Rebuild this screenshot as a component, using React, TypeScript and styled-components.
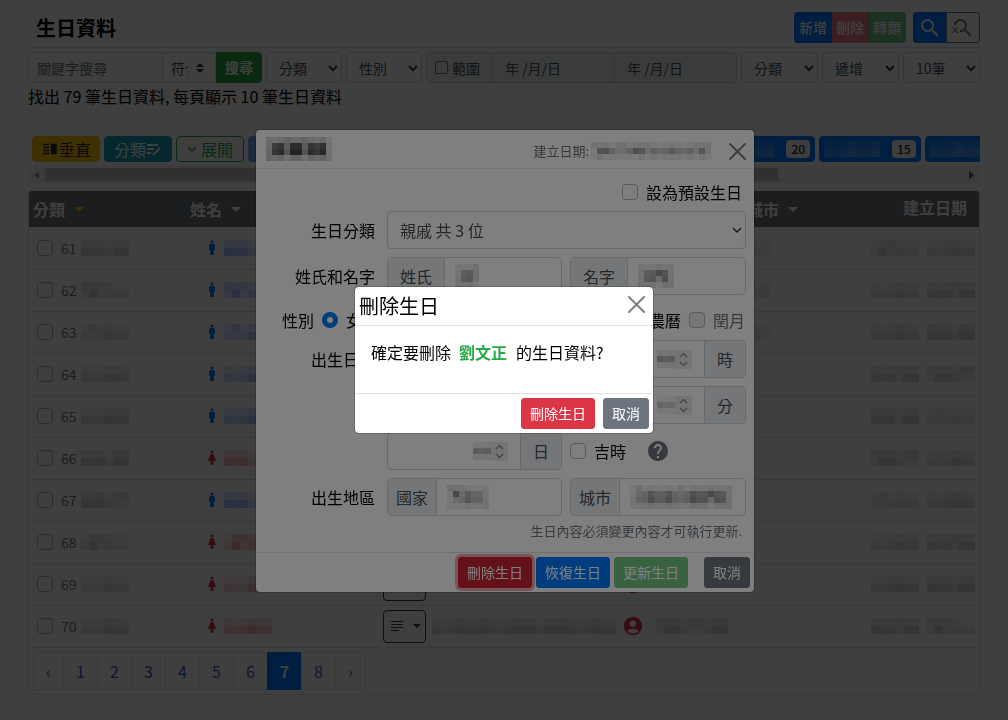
import React from "react";
import styled, { createGlobalStyle, css } from "styled-components";
import {
  MdAccountCircle,
  MdHelp,
  MdSearch,
  MdSearchOff,
  MdVerticalSplit,
} from "react-icons/md";

const BLUE = "#007bff";
const GREEN = "#28a745";
const RED = "#dc3545";
const GREY = "#6c757d";
const LINE = "#dee2e6";
const INPUT_LINE = "#ced4da";

const GlobalStyle = createGlobalStyle`
  *, *::before, *::after { box-sizing: border-box; }
  body {
    margin: 0;
    background: #fff;
    color: #000;
    font-family: "Noto Sans CJK TC", "Noto Sans", sans-serif;
    font-size: 16px;
    line-height: 24px;
  }
  button, input, select { font-family: inherit; margin: 0; }
`;

/* ---------- shared parts ---------- */

type MosaicProps = {
  cols: number;
  rows: number;
  cell?: number;
  color?: string;
  seed?: number;
  strength?: number;
};

const MosaicSvg = styled.svg`
  display: block;
  flex: none;
`;

/* Pixelated cover over private values; tall covers fade towards their edges. */
function Mosaic({ cols, rows, cell = 8, color = "#343a40", seed = 1, strength = 0.25 }: MosaicProps) {
  const cells: React.ReactNode[] = [];
  for (let r = 0; r < rows; r++) {
    for (let c = 0; c < cols; c++) {
      const noise = ((c * 37 + r * 53 + seed * 71 + c * c * 11) % 17) / 17;
      const edgeRow = rows > 2 && (r === 0 || r === rows - 1);
      const edgeCol = rows > 2 && cols > 3 && (c === 0 || c === cols - 1);
      const fade = edgeRow || edgeCol ? 0.3 : rows === 2 && r === 0 ? 0.6 : 1;
      cells.push(
        <rect
          key={`${r}-${c}`}
          x={c * cell}
          y={r * cell}
          width={cell}
          height={cell}
          fill={color}
          opacity={strength * fade * (0.35 + noise * 0.65)}
        />
      );
    }
  }
  return (
    <MosaicSvg width={cols * cell} height={rows * cell} shapeRendering="crispEdges" aria-hidden="true">
      {cells}
    </MosaicSvg>
  );
}

const Check = styled.input`
  appearance: none;
  flex: none;
  width: 16px;
  height: 16px;
  border: 1px solid #adb5bd;
  border-radius: 4px;
  background: #fff;
  &:disabled { background: #e9ecef; }
`;

const Radio = styled.input`
  appearance: none;
  flex: none;
  width: 16px;
  height: 16px;
  border: 1px solid #adb5bd;
  border-radius: 50%;
  &:checked { border: 5px solid ${BLUE}; }
`;

const Button = styled.button<{ $bg: string; $faded?: boolean; $focus?: boolean }>`
  height: 31px;
  padding: 0 8px;
  border: 1px solid ${(p) => p.$bg};
  border-radius: 3px;
  background: ${(p) => p.$bg};
  color: #fff;
  font-size: 14px;
  line-height: 21px;
  white-space: nowrap;
  opacity: ${(p) => (p.$faded ? 0.65 : 1)};
  ${(p) => p.$focus && css`box-shadow: 0 0 0 3px rgba(225, 83, 97, 0.5);`}
`;

const SelectBox = styled.div<{ $width?: number }>`
  display: grid;
  align-items: center;
  ${(p) => (p.$width ? `flex: 0 0 ${p.$width}px;` : "")}
  > * { grid-area: 1 / 1; }
  > svg { justify-self: end; margin-right: 4px; pointer-events: none; }
`;

const Select = styled.select<{ $large?: boolean }>`
  appearance: none;
  width: 100%;
  height: ${(p) => (p.$large ? 38 : 31)}px;
  padding: 0 12px;
  border: 1px solid ${INPUT_LINE};
  border-radius: 4px;
  background: #fff;
  color: #495057;
  font-size: ${(p) => (p.$large ? 16 : 14)}px;
`;

function Chevron({ size = 10, width = 2, color = "#343a40" }) {
  return (
    <svg width={size} height={size} viewBox="0 0 10 10" fill="none" stroke={color} strokeWidth={width}>
      <path d="M1 3l4 4 4-4" />
    </svg>
  );
}

function Dropdown({ label, text, width }: { label: string; text: string; width: number }) {
  return (
    <SelectBox $width={width}>
      <Select aria-label={label}>
        <option>{text}</option>
      </Select>
      <Chevron />
    </SelectBox>
  );
}

/* ---------- page ---------- */

const Page = styled.main`
  padding: 12px 28px 0;
`;

const TitleBar = styled.header`
  display: flex;
  align-items: center;
  height: 36px;
  padding: 0 0 4px 8px;
  border-bottom: 1px solid ${LINE};
`;

const Title = styled.h1`
  flex: 1;
  margin: 0;
  font-size: 20px;
  line-height: 30px;
  font-weight: 700;
`;

const ButtonGroup = styled.div`
  display: flex;
  margin-left: 7px;
  > button { padding: 0 4px; font-weight: 500; border-radius: 0; }
  > button + button { margin-left: -1px; }
  > button:first-child { border-radius: 3px 0 0 3px; }
  > button:last-child { border-radius: 0 3px 3px 0; }
`;

const IconButton = styled.button<{ $solid?: boolean }>`
  display: flex;
  align-items: center;
  width: 34px;
  height: 31px;
  border: 1px solid ${(p) => (p.$solid ? BLUE : GREY)};
  background: ${(p) => (p.$solid ? BLUE : "#fff")};
  color: ${(p) => (p.$solid ? "#fff" : GREY)};
`;

const Filters = styled.form`
  display: flex;
  gap: 4px;
  margin-top: 4px;
`;

const SearchGroup = styled.div`
  display: flex;
  flex: 0 0 234px;
  min-width: 0;
`;

const Keyword = styled.input`
  flex: 1 1 0;
  width: 0;
  min-width: 0;
  height: 31px;
  padding: 0 8px;
  border: 1px solid ${INPUT_LINE};
  border-radius: 4px 0 0 4px;
  font-size: 14px;
  &::placeholder { color: ${GREY}; }
`;

const MatchBox = styled(SelectBox)`
  > select { padding: 0 27px 0 8px; border-left: 0; border-radius: 0; }
  > svg { margin-right: 12px; }
`;

const SearchButton = styled(Button)`
  flex: 0 0 46px;
  font-weight: 700;
  border-radius: 0 4px 4px 0;
`;

const DateGroup = styled.div`
  display: flex;
  flex: 1;
  min-width: 0;
  height: 31px;
  border: 1px solid ${INPUT_LINE};
  border-radius: 4px;
  background: #e9ecef;
  color: #495057;
  font-size: 14px;
`;

const RangeLabel = styled.label`
  display: flex;
  align-items: center;
  gap: 4px;
  flex: 0 0 65px;
  padding-left: 8px;
  > input { width: 13px; height: 13px; border-color: ${GREY}; border-radius: 2px; background: none; }
`;

const DateInput = styled.input`
  flex: 1;
  min-width: 0;
  padding: 0 12px;
  border: 0;
  border-left: 1px solid ${INPUT_LINE};
  background: none;
  color: #495057;
  font-size: 14px;
`;

const Summary = styled.p`
  margin: 1px 0 28px;
`;

const Tags = styled.nav`
  display: flex;
  gap: 4px;
  padding-left: 4px;
  overflow: hidden;
`;

const Tag = styled.button<{ $bg: string; $fg: string; $line?: string; $width: number; $gap?: number }>`
  display: flex;
  align-items: center;
  justify-content: center;
  gap: ${(p) => p.$gap ?? 0}px;
  flex: 0 0 ${(p) => p.$width}px;
  height: 26px;
  padding: 0 4px;
  border: 1px solid ${(p) => p.$line || p.$bg};
  border-radius: 4px;
  background: ${(p) => p.$bg};
  color: ${(p) => p.$fg};
  font-size: 16px;
  line-height: 24px;
  white-space: nowrap;
`;

const Badge = styled.span`
  margin-left: 12px;
  padding: 0 5px;
  border-radius: 4px;
  background: #f8f9fa;
  color: #212529;
  font-size: 12px;
  line-height: 18px;
  font-weight: 500;
`;

const ScrollTrack = styled.div`
  display: flex;
  align-items: center;
  justify-content: space-between;
  height: 17px;
  margin: 4px 0 8px;
  padding: 0 6px;
  background: #f1f1f1;
`;

const ScrollThumb = styled.div`
  flex: 0 0 78%;
  height: 13px;
  margin: 0 auto 0 6px;
  background: #c1c1c1;
`;

const Card = styled.section`
  border: 1px solid ${LINE};
  border-top: 0;
  border-radius: 4px;
  overflow: hidden;
`;

const Table = styled.table`
  width: 100%;
  table-layout: fixed;
  border-collapse: collapse;
`;

const Th = styled.th<{ $width?: number; $right?: boolean }>`
  ${(p) => (p.$width ? `width: ${p.$width}px;` : "")}
  height: 36px;
  padding: ${(p) => (p.$right ? "0 12px 4px 4px" : "0 4px")};
  background: ${GREY};
  color: #fff;
  text-align: ${(p) => (p.$right ? "right" : "left")};
  font-weight: 700;
  white-space: nowrap;
`;

const Caret = styled.span<{ $color: string }>`
  display: inline-block;
  margin-left: 5px;
  border: 5px solid transparent;
  border-top-color: ${(p) => p.$color};
  border-bottom: 0;
  vertical-align: 4px;
`;

const Td = styled.td`
  height: 42px;
  padding: 0 4px;
  border-bottom: 1px solid ${LINE};
`;

const CellRow = styled.div<{ $pad?: number; $end?: boolean; $gap: number }>`
  display: flex;
  align-items: center;
  gap: ${(p) => p.$gap}px;
  padding-left: ${(p) => p.$pad ?? 0}px;
  justify-content: ${(p) => (p.$end ? "flex-end" : "flex-start")};
`;

const RowLabel = styled.label`
  display: flex;
  align-items: center;
  gap: 4px;
  padding-left: 4px;
  color: ${GREY};
  font-size: 14px;
  line-height: 20px;
  > input { margin-right: 4px; }
`;

const NoteButton = styled.button`
  display: flex;
  align-items: center;
  justify-content: space-between;
  flex: none;
  width: 43px;
  height: 33px;
  padding: 0 4px 0 7px;
  border: 1px solid #343a40;
  border-radius: 4px;
  background: #fff;
  color: #343a40;
  ${Caret} { margin: 0; border-width: 4px; border-bottom-width: 0; }
`;

const Pager = styled.ul`
  display: flex;
  margin: 4px;
  padding: 0;
  list-style: none;
  > li:first-child a { border-radius: 4px 0 0 4px; }
  > li:last-child a { border-radius: 0 4px 4px 0; }
  > li + li { margin-left: -1px; }
`;

const PageLink = styled.a<{ $active?: boolean; $arrow?: boolean }>`
  display: block;
  width: ${(p) => (p.$arrow ? 31 : 35)}px;
  height: 38px;
  border: 1px solid ${(p) => (p.$active ? BLUE : LINE)};
  background: ${(p) => (p.$active ? BLUE : "#fff")};
  color: ${(p) => (p.$active ? "#fff" : "#3759c8")};
  font-weight: ${(p) => (p.$active ? 700 : 400)};
  line-height: 36px;
  text-align: center;
  text-decoration: none;
`;

/* ---------- dialogs ---------- */

const Overlay = styled.div<{ $level: number; $shift?: boolean }>`
  position: fixed;
  inset: 0;
  z-index: ${(p) => p.$level};
  display: flex;
  align-items: center;
  justify-content: center;
  padding: ${(p) => (p.$shift ? "2px 0 0 2px" : "0")};
  background: rgba(0, 0, 0, 0.5);
`;

const Dialog = styled.div<{ $width: number }>`
  width: 100%;
  max-width: ${(p) => p.$width}px;
  border: 1px solid rgba(0, 0, 0, 0.2);
  border-radius: 5px;
  background: #fff;
  background-clip: padding-box;
`;

const DialogHead = styled.header`
  display: flex;
  align-items: center;
  height: 39px;
  padding: 0 8px 0 4px;
  border-bottom: 1px solid ${LINE};
`;

const DialogTitle = styled.h2`
  flex: 1;
  margin: 0;
  font-size: 20px;
  line-height: 30px;
  font-weight: 400;
`;

const CoveredTitle = styled.div`
  flex: 1;
  padding: 0 0 0 6px;
`;

const Created = styled.small`
  display: flex;
  align-items: center;
  gap: 2px;
  margin-right: 18px;
  padding-top: 4px;
  color: ${GREY};
  font-size: 13px;
  line-height: 20px;
`;

const CloseButton = styled.button<{ $raised?: boolean }>`
  display: flex;
  padding: ${(p) => (p.$raised ? "0 0 4px" : "4px 0 0")};
  border: 0;
  background: none;
  color: #808080;
`;

const DialogFoot = styled.footer<{ $gap: number }>`
  display: flex;
  justify-content: flex-end;
  gap: ${(p) => p.$gap}px;
  padding: 4px;
  border-top: 1px solid ${LINE};
`;

const FootSpace = styled.span`
  width: 8px;
`;

const Confirm = styled.p`
  margin: 0;
  padding: 14px 16px 29px;
`;

const Name = styled.strong`
  margin: 0 9px 0 8px;
  color: ${GREEN};
`;

const FormBody = styled.form`
  padding: 11px 8px 11px 0;
`;

const DefaultRow = styled.label`
  display: flex;
  align-items: center;
  justify-content: flex-end;
  gap: 8px;
  padding-right: 4px;
`;

const Rows = styled.div`
  display: grid;
  gap: 8px;
  margin: 7px 0 5px;
`;

const Row = styled.div<{ $single?: boolean }>`
  display: grid;
  grid-template-columns: ${(p) => (p.$single ? "123px 1fr" : "123px 175px 1fr")};
  column-gap: 8px;
  align-items: center;
`;

const RowTitle = styled.span`
  padding-right: 4px;
  text-align: right;
`;

const GenderRow = styled.div`
  display: flex;
  align-items: flex-end;
  gap: 8px;
  height: 29px;
  padding: 0 1px 0 26px;
`;

const Option = styled.label<{ $muted?: boolean; $gap?: number }>`
  display: flex;
  align-items: center;
  gap: ${(p) => p.$gap ?? 8}px;
  color: ${(p) => (p.$muted ? GREY : "#000")};
`;

const Spacer = styled.span`
  flex: 1;
`;

const Group = styled.label`
  display: flex;
  height: 38px;
  border: 1px solid ${INPUT_LINE};
  border-radius: 4px;
  overflow: hidden;
  color: #495057;
`;

const AddOn = styled.span<{ $pad: number; $end?: boolean }>`
  display: flex;
  align-items: center;
  padding: 0 ${(p) => p.$pad}px;
  background: #e9ecef;
  ${(p) => (p.$end ? `border-left: 1px solid ${INPUT_LINE};` : `border-right: 1px solid ${INPUT_LINE};`)}
`;

const Field = styled.span<{ $end?: boolean }>`
  display: flex;
  flex: 1;
  align-items: center;
  min-width: 0;
  padding: 0 12px 0 10px;
  > input {
    order: ${(p) => (p.$end ? 0 : 2)};
    flex: 1;
    min-width: 0;
    width: 0;
    border: 0;
    padding: 0;
    background: none;
  }
`;

const Stepper = styled.span`
  display: flex;
  padding: 2px 4px;
  background: #e9e9e9;
`;

const LuckyRow = styled.div`
  display: flex;
  align-items: center;
  gap: 20px;
  color: ${GREY};
`;

const Hint = styled.small`
  display: block;
  padding-right: 4px;
  color: ${GREY};
  font-size: 13px;
  line-height: 20px;
  text-align: right;
`;

/* ---------- icons ---------- */

const EditListIcon = () => (
  <svg width="16" height="16" viewBox="0 0 16 16" fill="none" stroke="currentColor" strokeWidth="2">
    <path d="M1 4h11M1 8h7M1 12h4M7 14l7-7" />
  </svg>
);

const NoteIcon = () => (
  <svg width="12" height="11" viewBox="0 0 12 11" fill="none" stroke="currentColor" shapeRendering="crispEdges">
    <path d="M0 .5h12M0 3.500h12M0 6.500h12M0 9.500h8" />
  </svg>
);

const CloseIcon = () => (
  <svg width="17" height="17" viewBox="0 0 17 17" fill="none" stroke="currentColor" strokeWidth="2" strokeLinecap="round">
    <path d="M1 1l15 15M16 1L1 16" />
  </svg>
);

const UpDownIcon = () => (
  <svg width="8" height="10" viewBox="0 0 8 10" fill="#343a40">
    <path d="M0 4l4-4 4 4zM0 6l4 4 4-4z" />
  </svg>
);

const StepIcon = () => (
  <svg width="9" height="15" viewBox="0 0 9 15" fill="none" stroke="#8a8f94" strokeWidth="1.500">
    <path d="M1 5l3.500-3.500L8 5M1 10l3.500 3.500L8 10" />
  </svg>
);

const ManIcon = () => (
  <svg width="8" height="16" viewBox="0 0 8 16" fill={BLUE}>
    <circle cx="4" cy="2" r="1.600" />
    <path d="M2.500 4h3Q7 4 7 5.500V10H5.800v5H2.200v-5H1V5.500Q1 4 2.500 4z" />
  </svg>
);

const WomanIcon = () => (
  <svg width="8" height="16" viewBox="0 0 8 16" fill={RED}>
    <circle cx="4" cy="2" r="1.600" />
    <path d="M3 4h2l1 1 2 6H5.500v4h-3v-4H0l2-6z" />
  </svg>
);

/* ---------- data ---------- */

const people = [
  { no: 61, male: true },
  { no: 62, male: true },
  { no: 63, male: true },
  { no: 64, male: true },
  { no: 65, male: true },
  { no: 66, male: false },
  { no: 67, male: true },
  { no: 68, male: false },
  { no: 69, male: false },
  { no: 70, male: false },
];

const tagCounts = [12, 8, 9, 11, 20, 15, 10];
const pages = ["‹", "1", "2", "3", "4", "5", "6", "7", "8", "›"];

function NumberField({ unit, seed }: { unit: string; seed: number }) {
  return (
    <Group>
      <Field $end>
        <input type="text" inputMode="numeric" aria-label={unit} />
        <Mosaic cols={3} rows={3} cell={6} seed={seed} strength={0.45} />
        <Stepper>
          <StepIcon />
        </Stepper>
      </Field>
      <AddOn $pad={12} $end>{unit}</AddOn>
    </Group>
  );
}

function TextField({ name, pad, cols, seed }: { name: string; pad: number; cols: number; seed: number }) {
  return (
    <Group>
      <AddOn $pad={pad}>{name}</AddOn>
      <Field>
        <Mosaic cols={cols} rows={4} cell={6} seed={seed} strength={0.6} />
        <input type="text" aria-label={name} />
      </Field>
    </Group>
  );
}

function EditDialog() {
  return (
    <Overlay $level={10} $shift>
      <Dialog $width={500} role="dialog">
        <DialogHead>
          <CoveredTitle>
            <Mosaic cols={11} rows={4} cell={6} seed={3} strength={0.8} color="#000" />
          </CoveredTitle>
          <Created>
            建立日期:
            <Mosaic cols={20} rows={3} cell={6} seed={5} strength={0.5} />
          </Created>
          <CloseButton type="button" aria-label="關閉"><CloseIcon /></CloseButton>
        </DialogHead>
        <FormBody>
          <DefaultRow>
            <Check type="checkbox" />
            設為預設生日
          </DefaultRow>
          <Rows>
            <Row $single>
              <RowTitle>生日分類</RowTitle>
              <SelectBox>
                <Select $large aria-label="生日分類">
                  <option>親戚 共 3 位</option>
                </Select>
                <Chevron width={1.5} />
              </SelectBox>
            </Row>
            <Row>
              <RowTitle>姓氏和名字</RowTitle>
              <TextField name="姓氏" pad={12} cols={4} seed={2} />
              <TextField name="名字" pad={12} cols={6} seed={8} />
            </Row>
            <GenderRow>
              <span>性別</span>
              <Option><Radio type="radio" name="gender" defaultChecked />女</Option>
              <Option><Radio type="radio" name="gender" />男</Option>
              <Spacer />
              <Option><Radio type="radio" name="calendar" />農曆</Option>
              <Option $muted><Check type="checkbox" disabled />閏月</Option>
            </GenderRow>
            <Row>
              <RowTitle>出生日期</RowTitle>
              <NumberField unit="年" seed={1} />
              <NumberField unit="時" seed={4} />
            </Row>
            <Row>
              <span />
              <NumberField unit="月" seed={6} />
              <NumberField unit="分" seed={7} />
            </Row>
            <Row>
              <span />
              <NumberField unit="日" seed={9} />
              <LuckyRow>
                <Option><Check type="checkbox" />吉時</Option>
                <MdHelp size={24} />
              </LuckyRow>
            </Row>
            <Row>
              <RowTitle>出生地區</RowTitle>
              <TextField name="國家" pad={8} cols={7} seed={11} />
              <TextField name="城市" pad={8} cols={17} seed={12} />
            </Row>
          </Rows>
          <Hint>生日內容必須變更內容才可執行更新.</Hint>
        </FormBody>
        <DialogFoot $gap={4}>
          <Button type="button" $bg="#c82333" $focus>刪除生日</Button>
          <Button type="button" $bg={BLUE}>恢復生日</Button>
          <Button type="button" $bg={GREEN} $faded>更新生日</Button>
          <FootSpace />
          <Button type="button" $bg={GREY}>取消</Button>
        </DialogFoot>
      </Dialog>
    </Overlay>
  );
}

function DeleteDialog() {
  return (
    <Overlay $level={20}>
      <Dialog $width={300} role="alertdialog">
        <DialogHead>
          <DialogTitle>刪除生日</DialogTitle>
          <CloseButton type="button" $raised aria-label="關閉"><CloseIcon /></CloseButton>
        </DialogHead>
        <Confirm>
          確定要刪除<Name>劉文正</Name>的生日資料?
        </Confirm>
        <DialogFoot $gap={8}>
          <Button type="button" $bg={RED}>刪除生日</Button>
          <Button type="button" $bg={GREY}>取消</Button>
        </DialogFoot>
      </Dialog>
    </Overlay>
  );
}

export default function App() {
  return (
    <>
      <GlobalStyle />
      <Page>
        <TitleBar>
          <Title>生日資料</Title>
          <ButtonGroup>
            <Button $bg={BLUE}>新增</Button>
            <Button $bg={RED} $faded>刪除</Button>
            <Button $bg={GREEN} $faded>轉類</Button>
          </ButtonGroup>
          <ButtonGroup>
            <IconButton $solid aria-label="搜尋"><MdSearch size={24} /></IconButton>
            <IconButton aria-label="清除搜尋"><MdSearchOff size={24} /></IconButton>
          </ButtonGroup>
        </TitleBar>
        <Filters>
          <SearchGroup>
            <Keyword type="text" placeholder="關鍵字搜尋" aria-label="關鍵字搜尋" />
            <MatchBox $width={53}>
              <Select aria-label="比對方式"><option>符合</option></Select>
              <UpDownIcon />
            </MatchBox>
            <SearchButton type="button" $bg={GREEN}>搜尋</SearchButton>
          </SearchGroup>
          <Dropdown label="分類" text="分類" width={76} />
          <Dropdown label="性別" text="性別" width={76} />
          <DateGroup>
            <RangeLabel><Check type="checkbox" />範圍</RangeLabel>
            <DateInput type="text" aria-label="開始日期" defaultValue="年 /月/日" />
            <DateInput type="text" aria-label="結束日期" defaultValue="年 /月/日" />
          </DateGroup>
          <Dropdown label="排序" text="分類" width={77} />
          <Dropdown label="順序" text="遞增" width={77} />
          <Dropdown label="每頁筆數" text="10筆" width={77} />
        </Filters>
        <Summary>找出 79 筆生日資料, 每頁顯示 10 筆生日資料</Summary>
        <Tags>
          <Tag $bg="#ffc107" $fg="#212529" $width={68}><MdVerticalSplit size={18} />垂直</Tag>
          <Tag $bg="#17a2b8" $fg="#fff" $width={68}>分類<EditListIcon /></Tag>
          <Tag $bg="#fff" $fg={GREEN} $line={GREEN} $width={68} $gap={4}>
            <Chevron width={1.5} color={GREEN} />展開
          </Tag>
          <Tag $bg="#6ea8fe" $fg="#fff" $width={40} aria-label="全部" />
          {tagCounts.map((n, i) => (
            <Tag key={i} $bg={BLUE} $fg="#fff" $width={101}>
              <Mosaic cols={7} rows={2} color="#e9ecef" seed={i + 2} strength={0.4} />
              <Badge>{n}</Badge>
            </Tag>
          ))}
        </Tags>
        <ScrollTrack>
          <svg width="5" height="8" fill="#a3a3a3"><path d="M5 0v8L0 4z" /></svg>
          <ScrollThumb />
          <svg width="5" height="8" fill="#505050"><path d="M0 0v8l5-4z" /></svg>
        </ScrollTrack>
        <Card>
          <Table>
            <thead>
              <tr>
                <Th $width={157}>分類 <Caret $color="#ffc107" /></Th>
                <Th $width={193}>姓名 <Caret $color="#fff" /></Th>
                <Th>備註</Th>
                <Th $width={91}>國家</Th>
                <Th $width={124}>城市 <Caret $color="#fff" /></Th>
                <Th $width={112} $right>建立日期</Th>
              </tr>
            </thead>
            <tbody>
              {people.map(({ no, male }) => (
                <tr key={no}>
                  <Td>
                    <RowLabel>
                      <Check type="checkbox" />
                      <span>{no}</span>
                      <Mosaic cols={6} rows={2} seed={no} />
                    </RowLabel>
                  </Td>
                  <Td>
                    <CellRow $pad={18} $gap={8}>
                      {male ? <ManIcon /> : <WomanIcon />}
                      <Mosaic cols={6} rows={2} seed={no} color={male ? "#2f6fff" : RED} strength={0.45} />
                    </CellRow>
                  </Td>
                  <Td>
                    <CellRow $gap={6}>
                      <NoteButton aria-label="備註">
                        <NoteIcon />
                        <Caret $color="#343a40" />
                      </NoteButton>
                      <Mosaic cols={23} rows={2} seed={no} />
                      <MdAccountCircle size={22} color={RED} />
                    </CellRow>
                  </Td>
                  <Td>
                    <Mosaic cols={9} rows={2} seed={no + 3} />
                  </Td>
                  <Td>{no < 64 && <Mosaic cols={3} rows={2} seed={no + 5} strength={0.12} />}</Td>
                  <Td>
                    <CellRow $end $gap={8}>
                      <Mosaic cols={6} rows={2} seed={no + 7} />
                      <Mosaic cols={6} rows={2} seed={no + 9} />
                    </CellRow>
                  </Td>
                </tr>
              ))}
            </tbody>
          </Table>
          <Pager>
            {pages.map((p, i) => (
              <li key={p}>
                <PageLink href="#" $active={p === "7"} $arrow={i === 0 || i === pages.length - 1}>
                  {p}
                </PageLink>
              </li>
            ))}
          </Pager>
        </Card>
      </Page>
      <EditDialog />
      <DeleteDialog />
    </>
  );
}
